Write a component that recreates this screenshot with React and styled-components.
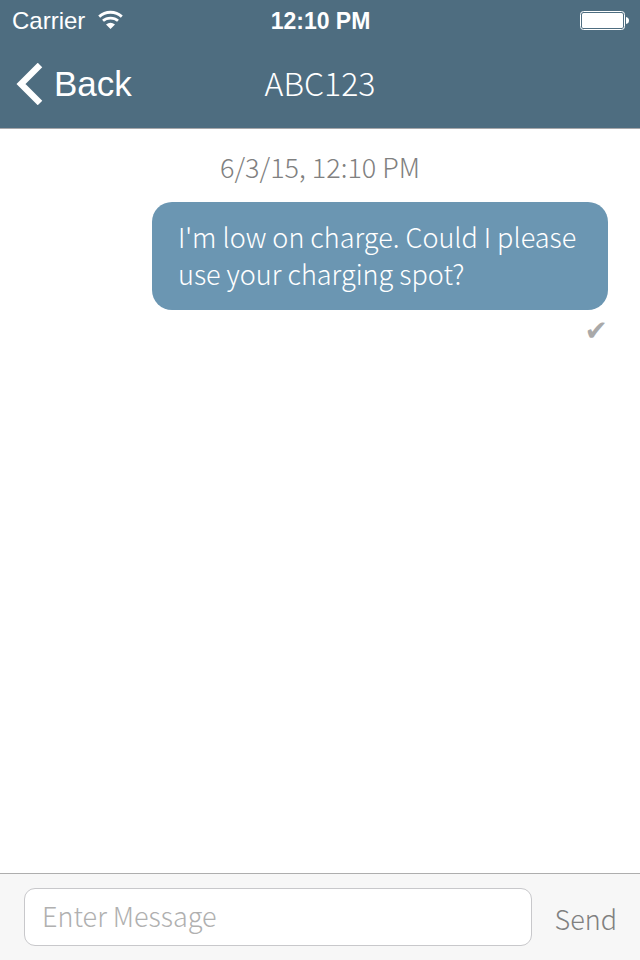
import React, { useState } from "react";
import styled, { createGlobalStyle } from "styled-components";

const sans = '"Liberation Sans", Arial, sans-serif';
const light = '"Noto Sans CJK SC", "Noto Sans", sans-serif';

const GlobalStyle = createGlobalStyle`
  *, *::before, *::after { box-sizing: border-box; }
  body { margin: 0; background: #fff; }
`;

const Screen = styled.div`
  display: flex;
  flex-direction: column;
  min-height: 100vh;
  font-family: ${light};
  font-weight: 300;
`;

const Header = styled.header`
  background: #4e6d80;
  color: #fff;
  border-bottom: 1px solid #a7a7aa;
`;

const Bar = styled.div`
  display: grid;
  grid-template-columns: 1fr auto 1fr;
  align-items: center;
`;

const StatusBar = styled(Bar)`
  height: 42px;
  padding: 0 11px 0 12px;
  font: 400 24px/28px ${sans};
`;

const NavBar = styled(Bar)`
  height: 86px;
  padding: 0 16px 2px;
`;

const Carrier = styled.div`
  display: flex;
  align-items: center;
  gap: 13px;
`;

const Clock = styled.time`
  font-size: 23px;
  font-weight: 700;
`;

const Battery = styled.svg`
  justify-self: end;
`;

const BackButton = styled.button`
  display: flex;
  align-items: center;
  justify-self: start;
  gap: 11px;
  padding: 0;
  border: 0;
  background: none;
  color: inherit;
  font: 400 35px/40px ${sans};
  cursor: pointer;
`;

const Title = styled.h1`
  margin: 0;
  padding-bottom: 4px;
  font-size: 32px;
  line-height: 40px;
  font-weight: 300;
`;

const Conversation = styled.main`
  display: flex;
  flex: 1;
  flex-direction: column;
  padding: 18px 32px;
`;

const Stamp = styled.time`
  align-self: center;
  color: #808080;
  font-size: 27px;
  line-height: 40px;
`;

const Message = styled.article`
  display: flex;
  flex-direction: column;
  align-items: flex-end;
  padding-left: 120px;
  margin-top: 15px;
`;

const Bubble = styled.p`
  width: 100%;
  margin: 0;
  padding: 16px 26px 18px;
  border-radius: 20px;
  background: #6b96b2;
  color: #fff;
  font-size: 27px;
  line-height: 37px;
`;

const Delivered = styled.span`
  margin-top: 6px;
  color: #a9a9a9;
  font: 400 28px/30px "DejaVu Sans", sans-serif;
`;

const Composer = styled.form`
  display: flex;
  align-items: center;
  gap: 22px;
  padding: 14px 23px 14px 24px;
  border-top: 1px solid #aeaeae;
  background: #f7f7f7;
`;

const MessageInput = styled.input`
  flex: 1;
  min-width: 0;
  height: 58px;
  padding: 0 17px 4px;
  border: 1px solid #c8c8cb;
  border-radius: 11px;
  background: #fff;
  color: #444;
  font: 300 27px/40px ${light};
  &::placeholder { color: #b0b0b0; opacity: 1; }
`;

const SendButton = styled.button`
  padding: 4px 0 0;
  border: 0;
  background: none;
  color: #808080;
  font: 300 27px/40px ${light};
  cursor: pointer;
`;

function WifiIcon() {
  return (
    <svg width="25" height="22" viewBox="0 0 25 22" fill="none" stroke="#fff" strokeWidth="2.8" aria-hidden="true">
      <path d="M1.2 6.6C7.5 .8 17.5 .8 23.8 6.6" />
      <path d="M5 10.8C9 7.3 16 7.3 20 10.8" />
      <path d="M12.5 19L8 14.600Q12.500 10.800 17 14.600Z" fill="#fff" stroke="none" />
    </svg>
  );
}

function BatteryIcon() {
  return (
    <Battery width="49" height="20" viewBox="0 0 49 20" role="img" aria-label="Battery full">
      <rect x=".5" y=".5" width="44" height="18" rx="3" fill="none" stroke="#fff" />
      <rect x="2" y="2" width="41" height="15" rx="1.5" fill="#fff" />
      <path d="M46 6Q49 6.5 49 9.5T46 13Z" fill="#fff" />
    </Battery>
  );
}

function BackIcon() {
  return (
    <svg width="27" height="42" viewBox="0 0 27 42" fill="none" stroke="#fff" strokeWidth="6.4" aria-hidden="true">
      <path d="M24 2L5 21L24 40" />
    </svg>
  );
}

export default function App() {
  const [draft, setDraft] = useState("");
  return (
    <Screen>
      <GlobalStyle />
      <Header>
        <StatusBar>
          <Carrier>Carrier <WifiIcon /></Carrier>
          <Clock>12:10 PM</Clock>
          <BatteryIcon />
        </StatusBar>
        <NavBar>
          <BackButton type="button"><BackIcon />Back</BackButton>
          <Title>ABC123</Title>
        </NavBar>
      </Header>
      <Conversation>
        <Stamp>6/3/15, 12:10 PM</Stamp>
        <Message>
          <Bubble>I'm low on charge. Could I please use your charging spot?</Bubble>
          <Delivered role="img" aria-label="Delivered">✔</Delivered>
        </Message>
      </Conversation>
      <Composer onSubmit={(event) => event.preventDefault()}>
        <MessageInput
          aria-label="Message"
          placeholder="Enter Message"
          value={draft}
          onChange={(event) => setDraft(event.target.value)}
        />
        <SendButton type="submit">Send</SendButton>
      </Composer>
    </Screen>
  );
}
